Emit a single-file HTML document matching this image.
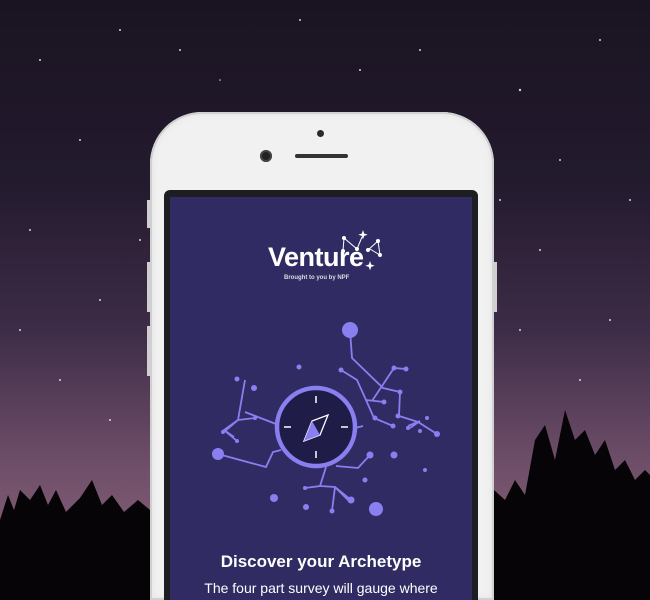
<!DOCTYPE html><html style="width:650px;height:600px;overflow:hidden"><head><style>
body{margin:0;width:650px;height:600px;overflow:hidden;position:relative;background:linear-gradient(180deg,#1a1421 0%,#231a2e 30%,#3d2c47 55%,#6a4b66 75%,#7a5770 85%);font-family:"Liberation Sans",sans-serif}
.phone{position:absolute;left:150px;top:112px;width:344px;height:488px;background:#f1f1f1;border-radius:52px 52px 0 0;box-shadow:inset 0 0 0 2px #d0d0d0,inset 0 0 6px 3px #e6e6e6}
.bezel{position:absolute;left:164px;top:190px;width:314px;height:410px;background:#1e1e22;border-radius:6px 6px 0 0}
.screen{position:absolute;left:170px;top:197px;width:302px;height:403px;background:#302b62}
</style></head><body>
<svg width="650" height="600" style="position:absolute;left:0;top:0">
<g fill="#fff" opacity=".8">
<circle cx="40" cy="60" r="1"/><circle cx="120" cy="30" r="1"/><circle cx="220" cy="80" r=".8"/><circle cx="300" cy="20" r="1"/><circle cx="420" cy="50" r="1"/><circle cx="520" cy="90" r="1.2"/><circle cx="600" cy="40" r="1"/><circle cx="560" cy="160" r="1"/><circle cx="80" cy="140" r="1"/><circle cx="30" cy="230" r="1"/><circle cx="100" cy="300" r="1"/><circle cx="60" cy="380" r="1"/><circle cx="110" cy="420" r="1"/><circle cx="540" cy="250" r="1"/><circle cx="610" cy="320" r="1"/><circle cx="580" cy="380" r="1"/><circle cx="520" cy="330" r="1"/><circle cx="630" cy="200" r="1"/><circle cx="20" cy="330" r="1"/><circle cx="140" cy="240" r="1"/><circle cx="500" cy="200" r="1"/><circle cx="360" cy="70" r="1"/><circle cx="180" cy="50" r="1"/>
</g>
<path fill="#060406" d="M0 600V520L8 495L14 510L20 490L30 500L40 485L48 505L56 490L66 512L80 498L92 480L102 505L112 495L124 512L138 500L150 510V600Z"/>
<path fill="#060406" d="M494 600V490L505 500L515 480L525 495L535 440L545 425L555 460L565 410L575 440L585 430L595 455L605 440L615 470L625 460L635 480L645 470L650 475V600Z"/>
</svg>
<div class="phone"></div>
<div style="position:absolute;left:147px;top:200px;width:3px;height:28px;background:#cfcfcf"></div>
<div style="position:absolute;left:147px;top:262px;width:3px;height:50px;background:#cfcfcf"></div>
<div style="position:absolute;left:147px;top:326px;width:3px;height:50px;background:#cfcfcf"></div>
<div style="position:absolute;left:494px;top:262px;width:3px;height:50px;background:#cfcfcf"></div>
<div style="position:absolute;left:317px;top:130px;width:7px;height:7px;border-radius:50%;background:#2a2a2a"></div>
<div style="position:absolute;left:260px;top:150px;width:12px;height:12px;border-radius:50%;background:#222;box-shadow:inset 0 0 0 2px #444"></div>
<div style="position:absolute;left:295px;top:154px;width:53px;height:4px;border-radius:2px;background:#333"></div>
<div class="bezel"></div>
<div class="screen"></div>
<div style="position:absolute;left:268px;top:242px;color:#fff;font-weight:bold;font-size:27px;letter-spacing:-0.5px">Venture</div>
<div style="position:absolute;left:284px;top:275px;color:#ddd;font-weight:bold;font-size:6px">Brought to you by NPF</div>
<svg width="650" height="600" style="position:absolute;left:0;top:0">
<g stroke="#fff" stroke-width="1" fill="#fff">
<path d="M343 251L344 238L357 249L362 237M368 250L378 241L380 255L370 249" fill="none"/>
<circle cx="343" cy="251" r="1.5"/><circle cx="344" cy="238" r="1.5"/><circle cx="357" cy="249" r="1.5"/><circle cx="368" cy="250" r="1.5"/><circle cx="378" cy="241" r="1.5"/><circle cx="380" cy="255" r="1.5"/>
<path d="M363 230l1.2 3.5 3.5 1.2-3.5 1.2-1.2 3.5-1.2-3.5-3.5-1.2 3.5-1.2z" stroke="none"/>
<path d="M370 261l1.2 3.5 3.5 1.2-3.5 1.2-1.2 3.5-1.2-3.5-3.5-1.2 3.5-1.2z" stroke="none"/>
</g>
<g stroke="#8a7ff0" stroke-width="1.8" fill="none">
<path d="M350 330L352 358L383 388L400 392L399 416L418 422L437 434"/>
<path d="M341 370L357 380L366 400L374 418L393 426M366 400L384 402M372 401L394 368L406 369"/>
<path d="M245 380L238 420L224 432M238 420L255 418M238 420L224 430L237 441M224 430L234 437"/>
<path d="M218 454L266 467L273 452L281 450"/>
<path d="M276 424L245 412"/>
<path d="M363 426L355 428M336 466L358 468L370 455"/>
<path d="M326 467L320 486L305 488M320 486L335 487L351 500M335 487L332 511M335 487L350 502"/>
<path d="M420 421L410 428M420 421L408 426"/>
</g>
<g fill="#8a7ff0">
<circle cx="350" cy="330" r="8"/><circle cx="341" cy="370" r="2.5"/><circle cx="394" cy="368" r="2.5"/><circle cx="406" cy="369" r="2.5"/><circle cx="400" cy="392" r="2.5"/><circle cx="384" cy="402" r="2.5"/><circle cx="375" cy="418" r="2.5"/><circle cx="393" cy="426" r="2.5"/><circle cx="398" cy="416" r="2.5"/><circle cx="437" cy="434" r="3"/><circle cx="420" cy="431" r="2"/><circle cx="427" cy="418" r="2"/><circle cx="408" cy="428" r="2"/>
<circle cx="299" cy="367" r="2.5"/><circle cx="237" cy="379" r="2.5"/><circle cx="254" cy="388" r="3"/><circle cx="223" cy="432" r="2"/><circle cx="237" cy="441" r="2"/><circle cx="255" cy="418" r="2"/>
<circle cx="218" cy="454" r="6"/><circle cx="370" cy="455" r="3.5"/><circle cx="394" cy="455" r="3.5"/><circle cx="425" cy="470" r="2"/><circle cx="365" cy="480" r="2.5"/>
<circle cx="274" cy="498" r="4"/><circle cx="306" cy="507" r="3"/><circle cx="351" cy="500" r="3.5"/><circle cx="332" cy="511" r="2.5"/><circle cx="376" cy="509" r="7"/><circle cx="305" cy="488" r="2"/>
</g>
<circle cx="316" cy="427" r="39" fill="#1f1c47" stroke="#8a7ff0" stroke-width="4.5"/>
<g stroke="#fff" stroke-width="1.5"><path d="M316 396v7M316 451v7M284 427h7M341 427h7"/></g>
<path d="M304 441L312 421L328 415L320 435Z" fill="none" stroke="#fff" stroke-width="1.3"/>
<path d="M304 441L312 421L320 435Z" fill="#8a7ff0"/>
</svg>
<div style="position:absolute;left:170px;width:302px;top:552px;text-align:center;color:#fff;font-weight:bold;font-size:17px">Discover your Archetype</div>
<div style="position:absolute;left:170px;width:302px;top:580px;height:20px;overflow:hidden;text-align:center;color:#fff;font-size:14px;line-height:16px;white-space:nowrap">The four part survey will gauge where</div>
</body></html>
